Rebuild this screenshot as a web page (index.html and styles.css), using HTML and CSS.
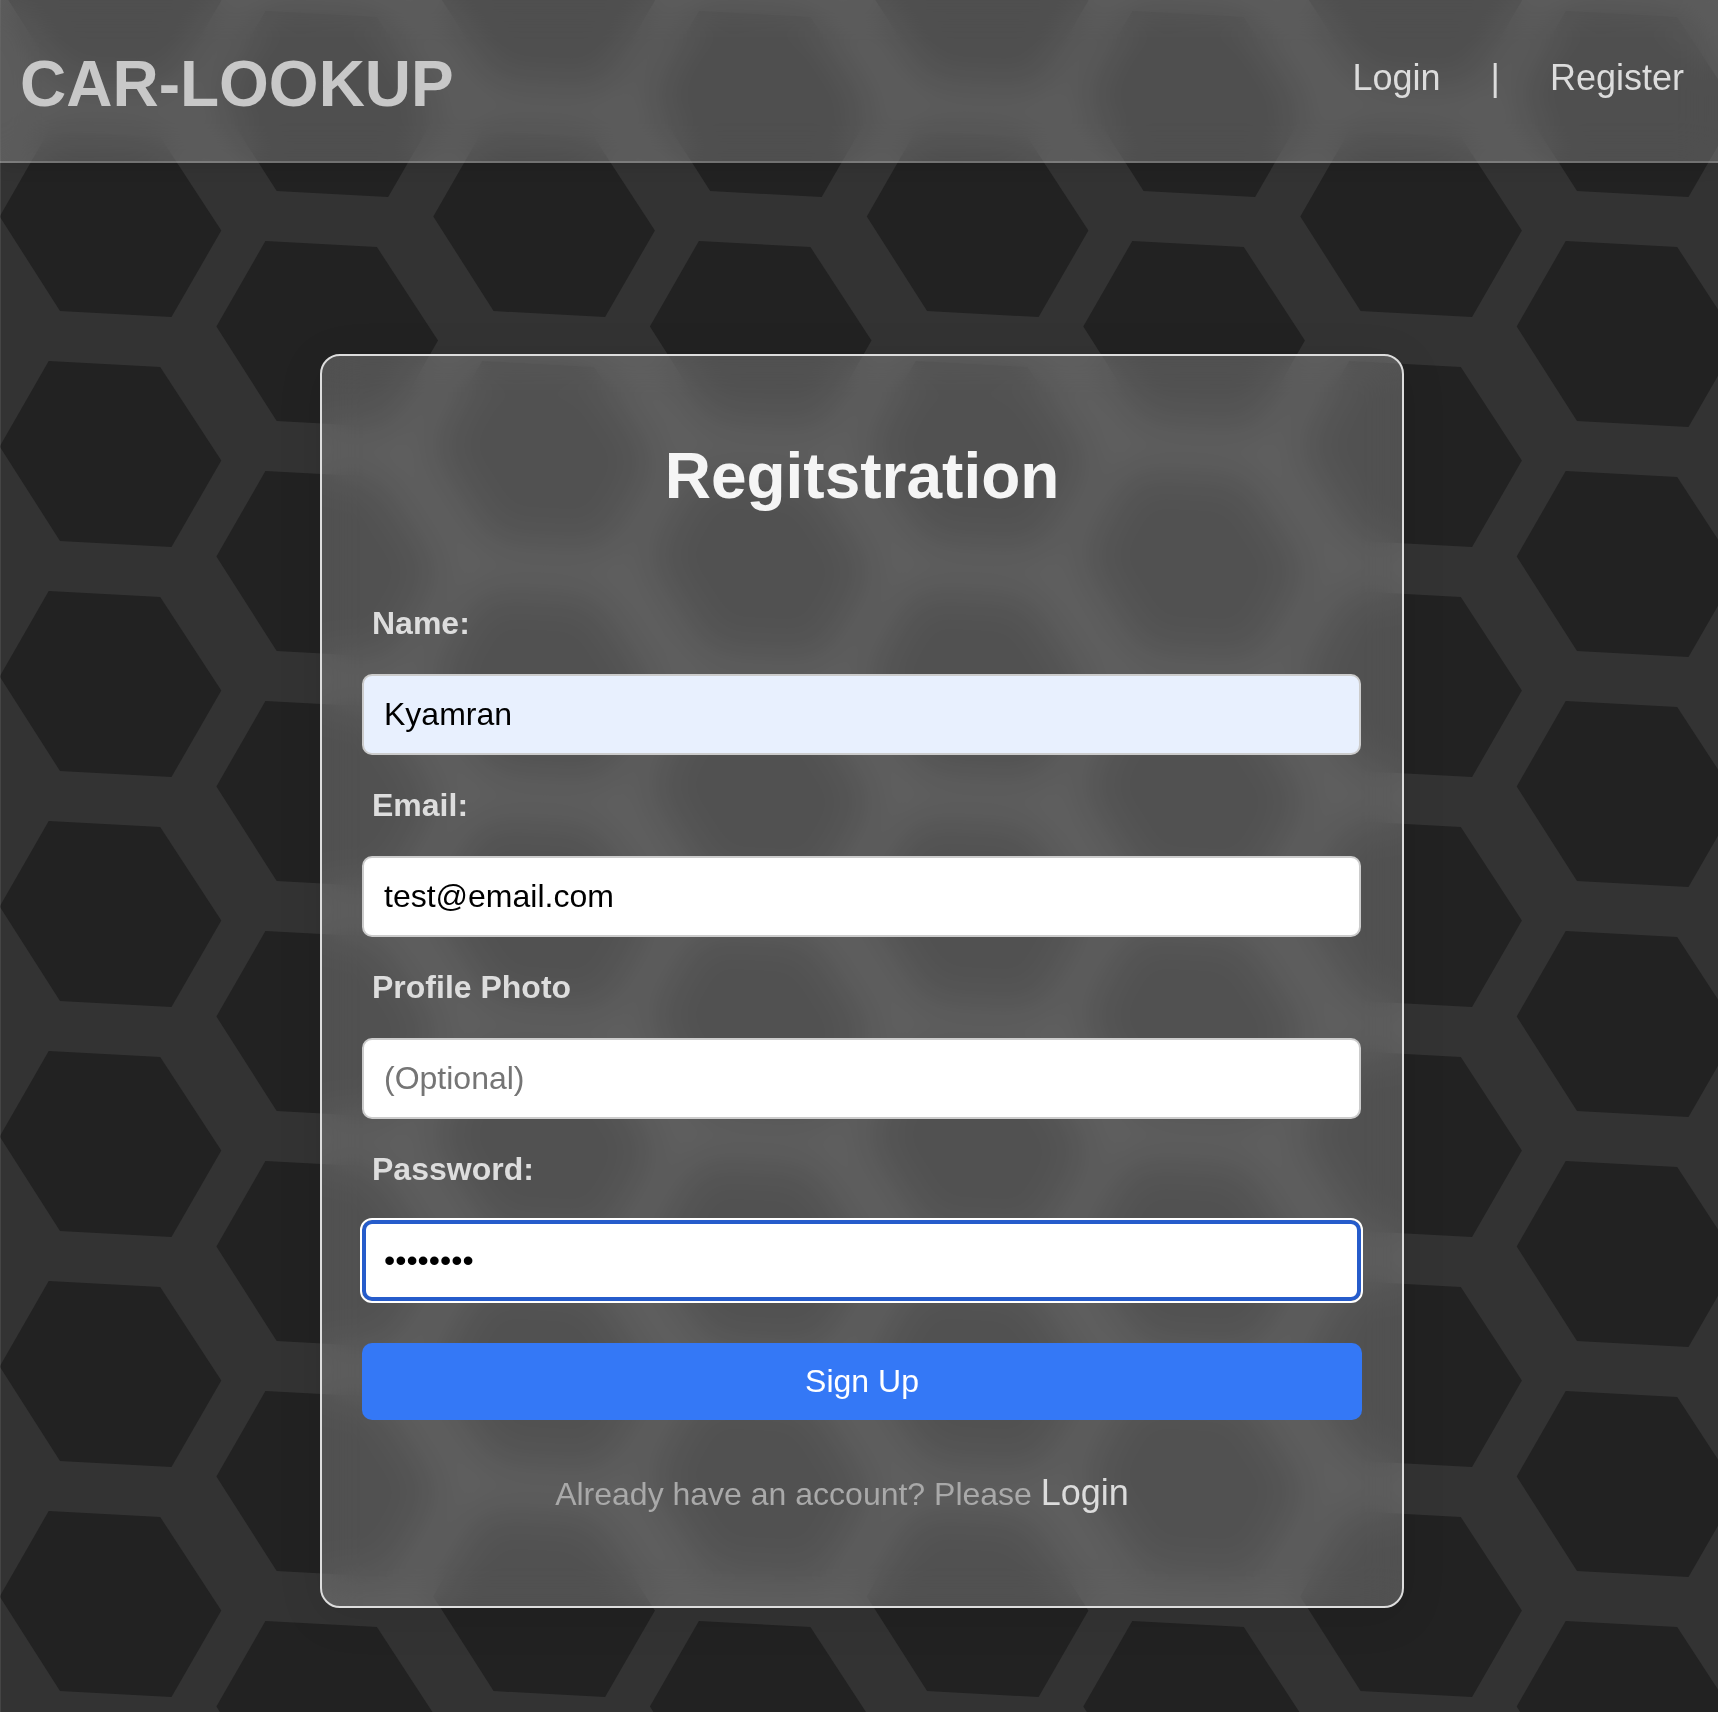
FILE: index.html
```html
<!DOCTYPE html>
<html lang="en">
<head>
<meta charset="utf-8">
<title>Car-Lookup</title>
<link rel="stylesheet" href="styles.css">
</head>
<body>
<svg class="backdrop" width="1718" height="1712" viewBox="0 0 1718 1712" aria-hidden="true">
  <defs>
    <polygon id="hex" points="-0.3,85.5 48.7,0 160.2,6 221.3,99.5 171.5,186 60,180"/>
    <g id="column">
      <use href="#hex" y="-99"/><use href="#hex" y="131"/><use href="#hex" y="361"/>
      <use href="#hex" y="591"/><use href="#hex" y="821"/><use href="#hex" y="1051"/>
      <use href="#hex" y="1281"/><use href="#hex" y="1511"/><use href="#hex" y="1741"/>
    </g>
  </defs>
  <use href="#column" x="0"/>
  <use href="#column" x="216.7" y="-120"/>
  <use href="#column" x="433.6"/>
  <use href="#column" x="650.2" y="-120"/>
  <use href="#column" x="867.1"/>
  <use href="#column" x="1083.6" y="-120"/>
  <use href="#column" x="1300.6"/>
  <use href="#column" x="1517" y="-120"/>
  <rect class="edge" width="1" height="1712"/>
</svg>
<header class="topbar">
  <h1 class="brand">CAR-LOOKUP</h1>
  <nav class="nav">
    <a class="link" href="#">Login</a>
    <span class="divider">|</span>
    <a class="link" href="#">Register</a>
  </nav>
</header>
<main class="page">
  <form class="card">
    <h2 class="title">Regitstration</h2>
    <label class="label" for="name">Name:</label>
    <input class="field field-autofilled" id="name" type="text" value="Kyamran">
    <label class="label" for="email">Email:</label>
    <input class="field" id="email" type="email" value="test@email.com">
    <label class="label" for="photo">Profile Photo</label>
    <input class="field" id="photo" type="text" placeholder="(Optional)">
    <label class="label" for="password">Password:</label>
    <input class="field field-active" id="password" type="password" value="password">
    <button class="submit" type="button">Sign Up</button>
    <p class="hint">Already have an account? Please <a class="link hint-link" href="#">Login</a></p>
  </form>
</main>
</body>
</html>
```
FILE: styles.css
```css
* {
  box-sizing: border-box;
}

body {
  margin: 0;
  height: 1712px;
  overflow: hidden;
  background: #333;
  font-family: "Liberation Sans", Arial, sans-serif;
  font-size: 32px;
}

.backdrop {
  position: absolute;
  inset: 0;
  z-index: -1;
  fill: #222;
}

.edge {
  fill: rgba(255, 255, 255, 0.09);
}

.topbar {
  display: flex;
  justify-content: space-between;
  align-items: flex-start;
  height: 163px;
  padding: 47px 34px 0 20px;
  background: rgba(255, 255, 255, 0.205);
  border-bottom: 2px solid rgba(255, 255, 255, 0.2);
  box-shadow: 0 4px 16px rgba(0, 0, 0, 0.1);
  backdrop-filter: blur(20px);
}

.brand {
  margin: 0;
  font-size: 64px;
  line-height: 74px;
  color: #c8c8c8;
}

.nav {
  display: flex;
  gap: 50px;
  margin-top: 11px;
  font-size: 36px;
  line-height: 40px;
  color: #dcdcdc;
}

.link {
  font-size: 36px;
  color: #dcdcdc;
  text-decoration: none;
}

.page {
  padding: 191px 314px 0 320px;
}

.card {
  display: flex;
  flex-direction: column;
  height: 1254px;
  padding: 83px 40px 0;
  border: 2px solid #ddd;
  border-radius: 20px;
  background: rgba(255, 255, 255, 0.214);
  box-shadow: 0 8px 45px rgba(0, 0, 0, 0.1);
  backdrop-filter: blur(20px);
}

.title {
  margin: 0 0 60px;
  font-size: 64px;
  line-height: 74px;
  text-align: center;
  color: #f5f5f5;
}

.label {
  margin: 32px 0 33px 10px;
  line-height: 36px;
  font-weight: bold;
  color: #ddd;
}

.field {
  width: 999px;
  height: 81px;
  padding: 0 20px;
  border: 2px solid #ccc;
  border-radius: 10px;
  background: #fff;
  font: inherit;
  color: #000;
}

.field::placeholder {
  color: #757575;
}

.field-autofilled {
  background: #e8f0fe;
}

.field-active {
  padding: 0 18px;
  border: 4px solid #265ccb;
  outline: 2px solid #fff;
}

.submit {
  height: 77px;
  margin-top: 42px;
  padding: 0;
  border: 0;
  border-radius: 10px;
  background: #3478f6;
  font: inherit;
  color: #fff;
}

.hint {
  margin: 53px 0 0;
  line-height: 40px;
  text-align: center;
  color: #a9a9a9;
}

.hint-link {
  margin-right: 40px;
}
```
